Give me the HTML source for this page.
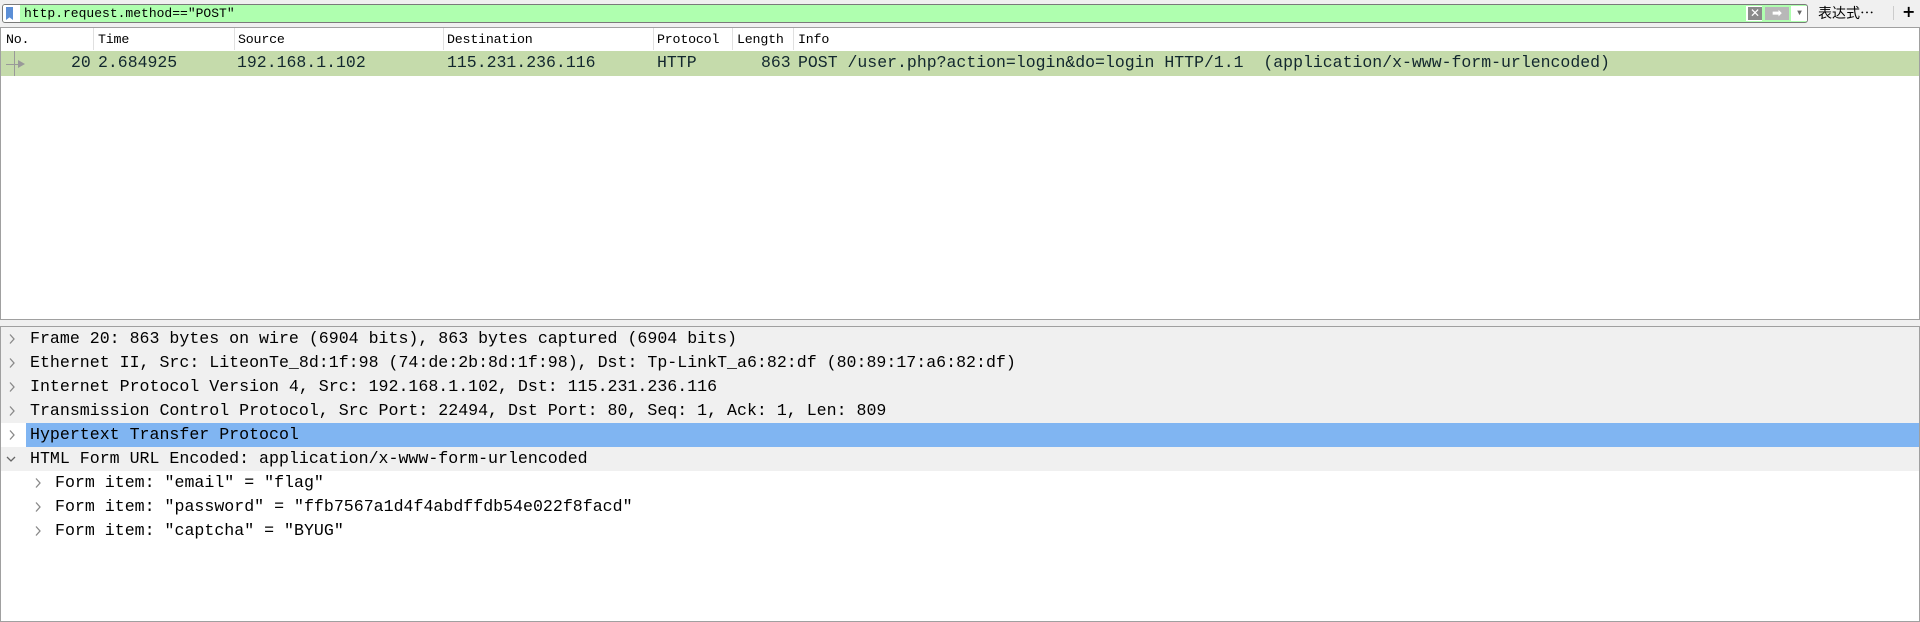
<!DOCTYPE html>
<html><head><meta charset="utf-8"><style>
*{margin:0;padding:0;box-sizing:border-box}
body{width:1920px;height:622px;background:#f0f0f0;position:relative;overflow:hidden;font-family:"Liberation Mono",monospace}
.abs{position:absolute;white-space:pre}
#filter{left:2px;top:4px;width:1806px;height:19px;border:1px solid #7a7a7a;border-radius:3px;background:#afffaf;overflow:hidden}
#plist{left:0;top:27px;width:1920px;height:293px;background:#fff;border:1px solid #a0a0a0}
#det{left:0;top:326px;width:1920px;height:296px;background:#fff;border:1px solid #a0a0a0}
.hd{font-family:"Liberation Mono",monospace;font-size:13.3px;color:#000;top:6px;letter-spacing:-0.2px}
.sep{position:absolute;top:0;width:1px;height:22px;background:#e0e0e0}
.pr{font-size:16.5px;color:#12272e;line-height:24px}
.row{position:absolute;left:0;width:1918px;height:24px;background:#f0f0f0}
.dt{position:absolute;font-size:16.6px;line-height:24px;white-space:pre;color:#000}
.ar{position:absolute;width:10px;height:24px}
</style></head><body>
<svg width="0" height="0" style="position:absolute"><defs>
<symbol id="r" viewBox="0 0 10 24"><path d="M3 7.5 L7 12 L3 16.5" fill="none" stroke="#888" stroke-width="1.3"/></symbol>
<symbol id="d" viewBox="0 0 10 24"><path d="M1 10 L5 14 L9 10" fill="none" stroke="#666" stroke-width="1.3"/></symbol>
</defs></svg>
<div id="filter" class="abs">
 <div style="position:absolute;left:0;top:0;width:17px;height:17px;background:#fff"></div>
 <div style="position:absolute;left:3px;top:2px;width:7px;height:13px;background:#5b8ed6;clip-path:polygon(0 0,100% 0,100% 100%,50% 80%,0 100%)"></div>
 <div style="position:absolute;left:21px;top:0px;font-family:'Liberation Mono',monospace;font-size:13px;line-height:17px">http.request.method=="POST"</div>
 <div style="position:absolute;left:1743px;top:1px;width:16px;height:15px;background:#fff"></div>
 <div style="position:absolute;left:1745px;top:2px;width:14px;height:13px;background:#8a8a8a;color:#fff;font:bold 12px 'DejaVu Sans';text-align:center;line-height:13px">✕</div>
 <div style="position:absolute;left:1762px;top:2px;width:24px;height:13px;background:#b8b8b8;color:#fff;font:bold 12px 'DejaVu Sans';text-align:center;line-height:13px">➡</div>
 <div style="position:absolute;left:1788px;top:1px;width:17px;height:15px;background:#fff;color:#666;font-size:8px;text-align:center;line-height:15px">▼</div>
</div>
<div class="abs" style="left:1818px;top:3px;font-family:'Noto Sans CJK SC',sans-serif;font-size:14px;line-height:20px">表达式…</div>
<div class="abs" style="left:1893px;top:6px;width:1px;height:14px;background:#ccc"></div>
<div class="abs" style="left:1902px;top:2px;font:bold 16px 'DejaVu Sans';line-height:20px">+</div>
<div id="plist" class="abs">
 <div class="sep" style="left:92px"></div><div class="sep" style="left:233px"></div><div class="sep" style="left:442px"></div><div class="sep" style="left:652px"></div><div class="sep" style="left:731px"></div><div class="sep" style="left:792px"></div>
 <div class="abs hd" style="left:5px;top:4px">No.</div>
 <div class="abs hd" style="left:97px;top:4px">Time</div>
 <div class="abs hd" style="left:237px;top:4px">Source</div>
 <div class="abs hd" style="left:446px;top:4px">Destination</div>
 <div class="abs hd" style="left:656px;top:4px">Protocol</div>
 <div class="abs hd" style="left:736px;top:4px">Length</div>
 <div class="abs hd" style="left:797px;top:4px">Info</div>
 <div style="position:absolute;left:0;top:23px;width:1918px;height:25px;background:#c5dbab"></div>
 <div style="position:absolute;left:13px;top:23px;width:1px;height:25px;background:#999"></div>
 <div style="position:absolute;left:5px;top:36px;width:13px;height:1px;background:#999"></div>
 <div style="position:absolute;left:17px;top:32px;border-left:7px solid #999;border-top:4px solid transparent;border-bottom:4px solid transparent"></div>
 <div class="abs pr" style="left:70px;top:23px">20</div>
 <div class="abs pr" style="left:97px;top:23px">2.684925</div>
 <div class="abs pr" style="left:236px;top:23px">192.168.1.102</div>
 <div class="abs pr" style="left:446px;top:23px">115.231.236.116</div>
 <div class="abs pr" style="left:656px;top:23px">HTTP</div>
 <div class="abs pr" style="left:760px;top:23px">863</div>
 <div class="abs pr" style="left:797px;top:23px">POST /user.php?action=login&amp;do=login HTTP/1.1  (application/x-www-form-urlencoded)</div>
</div>
<div id="det" class="abs">
 <div class="row" style="top:0"></div><div class="row" style="top:24px"></div><div class="row" style="top:48px"></div><div class="row" style="top:72px"></div>
 <div class="row" style="top:96px;left:25px;width:1893px;background:#80b5f2"></div>
 <div class="row" style="top:120px"></div>
 <svg class="ar" style="left:6px;top:0"><use href="#r"/></svg><div class="dt" style="left:29px;top:0">Frame 20: 863 bytes on wire (6904 bits), 863 bytes captured (6904 bits)</div>
 <svg class="ar" style="left:6px;top:24px"><use href="#r"/></svg><div class="dt" style="left:29px;top:24px">Ethernet II, Src: LiteonTe_8d:1f:98 (74:de:2b:8d:1f:98), Dst: Tp-LinkT_a6:82:df (80:89:17:a6:82:df)</div>
 <svg class="ar" style="left:6px;top:48px"><use href="#r"/></svg><div class="dt" style="left:29px;top:48px">Internet Protocol Version 4, Src: 192.168.1.102, Dst: 115.231.236.116</div>
 <svg class="ar" style="left:6px;top:72px"><use href="#r"/></svg><div class="dt" style="left:29px;top:72px">Transmission Control Protocol, Src Port: 22494, Dst Port: 80, Seq: 1, Ack: 1, Len: 809</div>
 <svg class="ar" style="left:6px;top:96px"><use href="#r"/></svg><div class="dt" style="left:29px;top:96px">Hypertext Transfer Protocol</div>
 <svg class="ar" style="left:5px;top:120px"><use href="#d"/></svg><div class="dt" style="left:29px;top:120px">HTML Form URL Encoded: application/x-www-form-urlencoded</div>
 <svg class="ar" style="left:32px;top:144px"><use href="#r"/></svg><div class="dt" style="left:54px;top:144px">Form item: "email" = "flag"</div>
 <svg class="ar" style="left:32px;top:168px"><use href="#r"/></svg><div class="dt" style="left:54px;top:168px">Form item: "password" = "ffb7567a1d4f4abdffdb54e022f8facd"</div>
 <svg class="ar" style="left:32px;top:192px"><use href="#r"/></svg><div class="dt" style="left:54px;top:192px">Form item: "captcha" = "BYUG"</div>
</div>
</body></html>
